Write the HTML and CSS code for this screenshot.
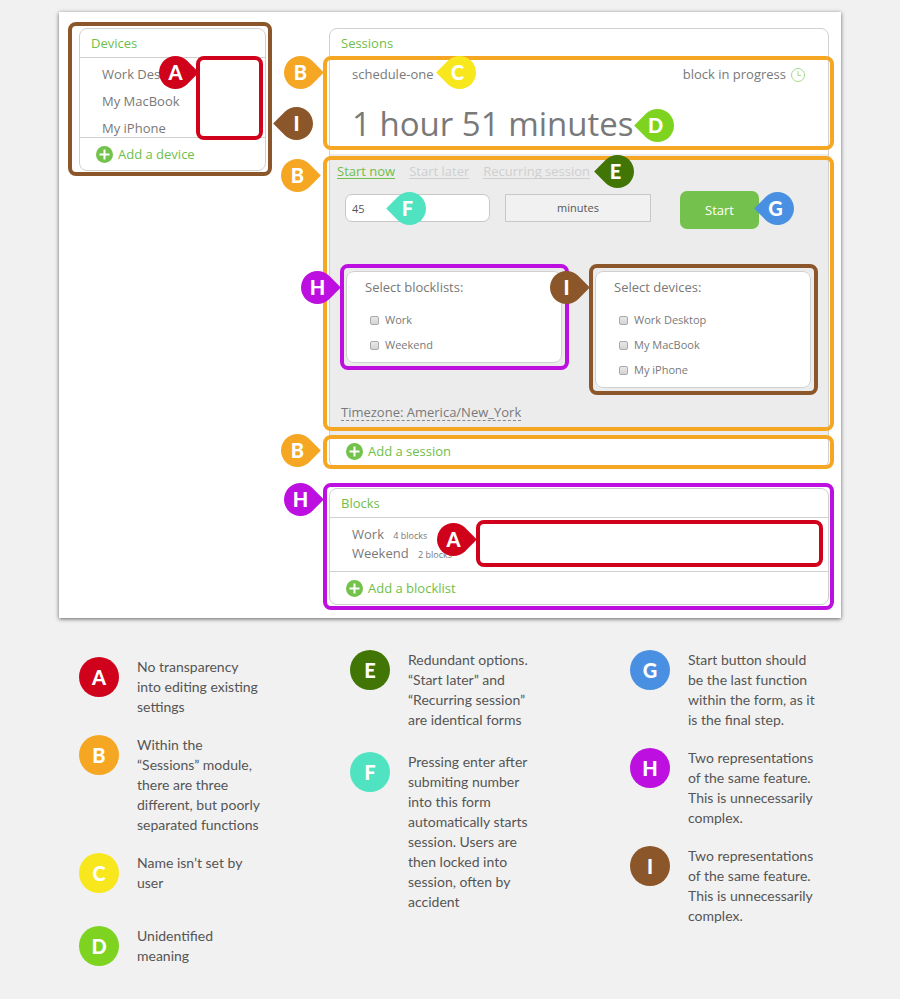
FILE: index.html
```html
<!DOCTYPE html>
<html lang="en">
<head>
<meta charset="utf-8">
<title>Sessions dashboard review</title>
<link rel="stylesheet" href="styles.css">
</head>
<body>
<main class="panel">
  <section class="card devices">
    <h2 class="card-title">Devices</h2>
    <ul class="device-list">
      <li>Work Desktop</li>
      <li>My MacBook</li>
      <li>My iPhone</li>
    </ul>
    <a class="add" href="#">
      <svg class="plus" viewBox="0 0 17 17" aria-hidden="true"><circle cx="8.500" cy="8.500" r="8.500"/><path d="M8.500 3.500v10M3.500 8.500h10"/></svg>
      Add a device
    </a>
    <div class="frame frame-devices brown"><span class="pin pin-left brown">I</span></div>
    <div class="frame frame-device-edit red"><span class="pin red">A</span></div>
  </section>

  <div class="main-column">
    <section class="card">
      <h2 class="card-title">Sessions</h2>
      <div class="session">
        <div class="session-head">
          <span>schedule-one</span>
          <span class="status">block in progress
            <svg class="clock" viewBox="0 0 16 16" aria-hidden="true"><circle cx="8" cy="9" r="6.500"/><path d="M8 5v4.500h3"/></svg>
          </span>
        </div>
        <p class="remaining">1 hour 51 minutes</p>
        <div class="frame frame-session orange"><span class="pin pin-top orange">B</span></div>
        <span class="pin pin-left pin-name yellow">C</span>
        <span class="pin pin-left pin-time lime">D</span>
      </div>

      <form class="session-form">
        <nav class="tabs">
          <a class="active" href="#">Start now</a>
          <a href="#">Start later</a>
          <a href="#">Recurring session</a>
        </nav>
        <div class="fields">
          <input class="amount" type="text" value="45" aria-label="Duration">
          <select class="unit" aria-label="Unit"><option>minutes</option></select>
          <button class="start" type="button">Start</button>
        </div>
        <div class="choices">
          <fieldset class="choice">
            <div class="choice-title">Select blocklists:</div>
            <label><input type="checkbox">Work</label>
            <label><input type="checkbox">Weekend</label>
            <div class="frame frame-choice purple"><span class="pin purple">H</span></div>
          </fieldset>
          <fieldset class="choice">
            <div class="choice-title">Select devices:</div>
            <label><input type="checkbox">Work Desktop</label>
            <label><input type="checkbox">My MacBook</label>
            <label><input type="checkbox">My iPhone</label>
            <div class="frame frame-choice brown"><span class="pin brown">I</span></div>
          </fieldset>
        </div>
        <a class="timezone" href="#">Timezone: America/New_York</a>
        <div class="frame frame-form orange"><span class="pin pin-form orange">B</span></div>
        <span class="pin pin-left pin-tabs green">E</span>
        <span class="pin pin-left pin-amount aqua">F</span>
        <span class="pin pin-left pin-start blue">G</span>
      </form>

      <div class="add-row">
        <a class="add" href="#">
          <svg class="plus" viewBox="0 0 17 17" aria-hidden="true"><circle cx="8.500" cy="8.500" r="8.500"/><path d="M8.500 3.500v10M3.500 8.500h10"/></svg>
          Add a session
        </a>
        <div class="frame frame-add orange"><span class="pin pin-add orange">B</span></div>
      </div>
    </section>

    <section class="card">
      <h2 class="card-title">Blocks</h2>
      <ul class="block-list">
        <li>Work <small>4 blocks</small></li>
        <li>Weekend <small>2 blocks</small></li>
      </ul>
      <a class="add" href="#">
        <svg class="plus" viewBox="0 0 17 17" aria-hidden="true"><circle cx="8.500" cy="8.500" r="8.500"/><path d="M8.500 3.500v10M3.500 8.500h10"/></svg>
        Add a blocklist
      </a>
      <div class="frame frame-blocks purple"><span class="pin pin-top purple">H</span></div>
      <div class="frame frame-block-edit red"><span class="pin pin-block red">A</span></div>
    </section>
  </div>
</main>

<section class="legend">
  <div class="legend-column first">
    <div class="note"><b class="dot red">A</b><p>No transparency<br>into editing existing<br>settings</p></div>
    <div class="note"><b class="dot orange">B</b><p>Within the<br>“Sessions” module,<br>there are three<br>different, but poorly<br>separated functions</p></div>
    <div class="note"><b class="dot yellow">C</b><p>Name isn’t set by<br>user</p></div>
    <div class="note"><b class="dot lime">D</b><p>Unidentified<br>meaning</p></div>
  </div>
  <div class="legend-column second">
    <div class="note"><b class="dot green">E</b><p>Redundant options.<br>“Start later” and<br>“Recurring session”<br>are identical forms</p></div>
    <div class="note"><b class="dot aqua">F</b><p>Pressing enter after<br>submiting number<br>into this form<br>automatically starts<br>session. Users are<br>then locked into<br>session, often by<br>accident</p></div>
  </div>
  <div class="legend-column">
    <div class="note"><b class="dot blue">G</b><p>Start button should<br>be the last function<br>within the form, as it<br>is the final step.</p></div>
    <div class="note"><b class="dot purple">H</b><p>Two representations<br>of the same feature.<br>This is unnecessarily<br>complex.</p></div>
    <div class="note"><b class="dot brown">I</b><p>Two representations<br>of the same feature.<br>This is unnecessarily<br>complex.</p></div>
  </div>
</section>
</body>
</html>
```
FILE: styles.css
```css
* { box-sizing: border-box; }

body {
  margin: 0;
  padding: 12px 59px 16px;
  background: #f1f1f1;
  color: #797979;
  font: 13px/16px "Open Sans", "Noto Sans", sans-serif;
}

h2, p, ul { margin: 0; padding: 0; font: inherit; }
ul { list-style: none; }
a { color: inherit; text-decoration: none; }

.red { --mark: #d0021b; }
.orange { --mark: #f5a623; }
.yellow { --mark: #f8e71c; }
.lime { --mark: #7ed321; }
.green { --mark: #417505; }
.aqua { --mark: #50e3c2; }
.blue { --mark: #4a90e2; }
.purple { --mark: #bd10e0; }
.brown { --mark: #8b572a; }

/* Dashboard */
.panel {
  display: grid;
  grid-template-columns: 187px 1fr;
  gap: 63px;
  align-items: start;
  padding: 16px 12px 13px 20px;
  background: #fff;
  box-shadow: 0 1px 4px rgba(0, 0, 0, 0.6);
}

.main-column { display: grid; gap: 20px; }

.card {
  position: relative;
  border: 1px solid #d0d0d0;
  border-radius: 8px;
}

.card-title {
  padding: 6px 11px;
  border-bottom: 1px solid #d0d0d0;
  color: #6fbe4a;
}

.device-list {
  display: grid;
  gap: 11px;
  padding: 8px 22px 1px;
  border-bottom: 1px solid #d0d0d0;
}

.add {
  display: flex;
  align-items: center;
  gap: 5px;
  height: 32px;
  padding: 0 16px;
  color: #6fbe4a;
}

.plus { width: 17px; height: 17px; fill: #72c24b; }
.plus path { stroke: #fff; stroke-width: 2; }

.session { position: relative; padding: 8px 22px; }
.session-head { display: flex; justify-content: space-between; }
.status { display: flex; align-items: center; gap: 4px; }
.clock { width: 16px; height: 16px; fill: none; stroke: #a4d98a; }
.remaining { margin-top: 20px; font-size: 33px; line-height: 44px; }

.session-form {
  position: relative;
  padding: 9px 17px 14px 16px;
  background: #ececec;
}

.tabs { display: flex; gap: 14px; margin-left: -9px; color: #cfcfcf; }
.tabs a { height: 16px; border-bottom: 1px solid; }
.tabs .active { color: #6fbe4a; }

.fields { display: flex; align-items: flex-start; margin-top: 12px; margin-left: -1px; }

.amount, .unit {
  height: 28px;
  margin-top: 3px;
  border: 1px solid #c8c8c8;
  color: #555;
  font: 11px/16px "Open Sans", "Noto Sans", sans-serif;
}
.amount { width: 145px; padding: 0 6px; border-radius: 7px; background: #fff; }
.unit {
  width: 146px;
  margin-left: 15px;
  padding: 0;
  appearance: none;
  border-radius: 0;
  background: #f1f1f1;
  text-align-last: center;
}
.start {
  width: 79px;
  height: 38px;
  margin-left: 29px;
  border: 0;
  border-radius: 7px;
  background: #74c24d;
  color: #fff;
  font: inherit;
}

.choices {
  display: grid;
  grid-template-columns: 1fr 1fr;
  gap: 33px;
  align-items: start;
  margin-top: 42px;
}
.choice {
  position: relative;
  display: grid;
  gap: 9px;
  min-width: 0;
  margin: 0;
  padding: 7px 18px 9px;
  border: 1px solid #d0d0d0;
  border-radius: 8px;
  background: #fff;
}
.choice-title { margin-bottom: 8px; }
.choice label {
  display: flex;
  align-items: center;
  gap: 6px;
  padding-left: 5px;
  font-size: 11px;
}
.choice input {
  appearance: none;
  width: 9px;
  height: 9px;
  margin: 0;
  border: 1px solid #aaa;
  border-radius: 2px;
  background: linear-gradient(#e8e8e8, #d4d4d4);
}

.timezone {
  display: table;
  height: 16px;
  margin: 16px 0 0 -5px;
  border-bottom: 1px dashed #888;
}

.add-row { position: relative; }

.block-list {
  padding: 7px 22px 8px;
  border-bottom: 1px solid #d0d0d0;
  line-height: 19px;
}
.block-list small { margin-left: 6px; font-size: 9px; line-height: 9px; }

/* Annotation frames and pins */
.frame {
  position: absolute;
  border: 4px solid var(--mark);
  border-radius: 8px;
  pointer-events: none;
}
.frame-devices { inset: -7px -7px -6px -12px; }
.frame-device-edit { top: 27px; right: 2px; width: 67px; height: 84px; background: #fff; }
.frame-session { inset: -2px -6px 4px -7px; }
.frame-form { inset: 2px -6px 4px -7px; }
.frame-add { inset: 0 -6px -2px -7px; }
.frame-choice { inset: -8px -8px -8px -7px; }
.frame-blocks { inset: -6px -6px -6px -7px; }
.frame-block-edit { inset: 31px 5px 37px 146px; background: #fff; }

.pin {
  position: absolute;
  z-index: 1;
  top: 3px;
  left: -43px;
  width: 33px;
  height: 33px;
  color: #fff;
  font: 900 20px/33px Lato, sans-serif;
  text-align: center;
}
.pin::before {
  content: "";
  position: absolute;
  z-index: -1;
  inset: 0;
  border-radius: 50% 0 50% 50%;
  background: var(--mark);
  transform: rotate(45deg);
}
.pin-left { padding-right: 4px; }
.pin-left::before { transform: rotate(-135deg); }

.frame-device-edit .pin { top: -4px; left: -41px; }
.frame-devices .pin { top: 81px; left: auto; right: -45px; padding-right: 0; }
.pin-top { top: -4px; }
.pin-form { top: -1px; left: -46px; }
.pin-add { top: -5px; left: -46px; }
.pin-block { top: -1px; }
.pin-name { top: -2px; left: 113px; }
.pin-time { top: 51px; left: 311px; }
.pin-tabs { top: 1px; left: 271px; }
.pin-amount { top: 38px; left: 63px; }
.pin-start { top: 38px; left: auto; right: 34px; }

/* Legend */
.legend {
  display: grid;
  grid-template-columns: 271px 280px 1fr;
  padding: 32px 0 0 20px;
  color: #555;
  font: 14px/20px Lato, sans-serif;
}
.legend-column { display: grid; align-content: start; gap: 18px; }
.first { padding-top: 7px; }
.second { gap: 22px; }
.note { display: flex; gap: 18px; min-height: 55px; }
.dot {
  flex: none;
  width: 40px;
  height: 40px;
  border-radius: 50%;
  background: var(--mark);
  color: #fff;
  font: 900 20px/40px Lato, sans-serif;
  text-align: center;
}
```
